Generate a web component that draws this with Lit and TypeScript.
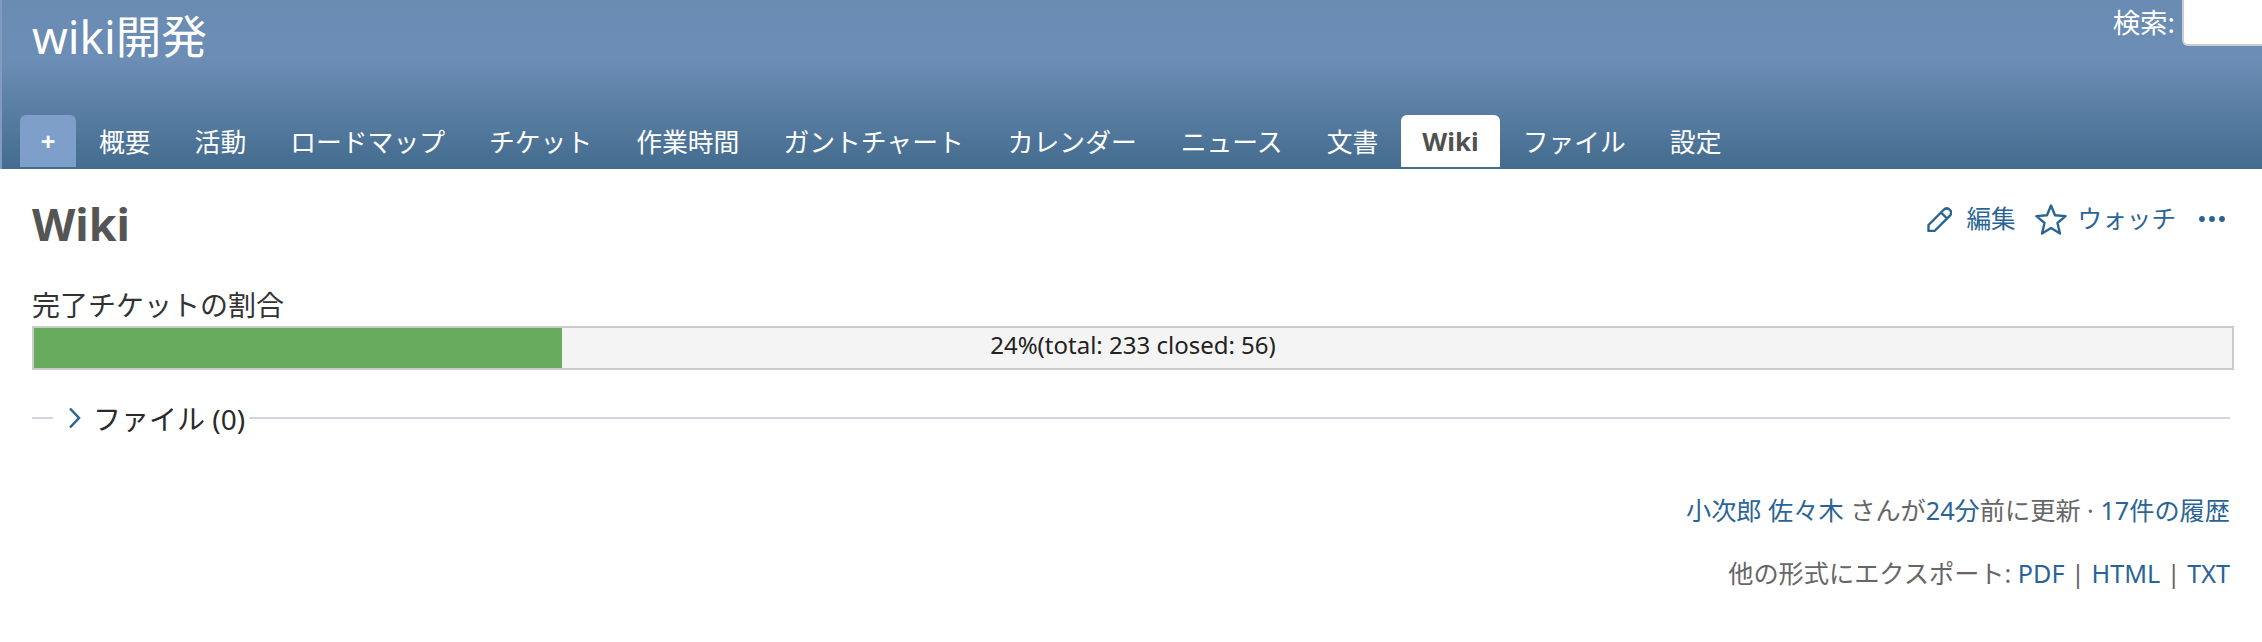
import { LitElement, html, css } from "lit";
import { customElement } from "lit/decorators.js";

const TABS = ["概要","活動","ロードマップ","チケット","作業時間","ガントチャート","カレンダー","ニュース","文書","Wiki","ファイル","設定"];

@customElement("app-root")
export class AppRoot extends LitElement {
  static styles = css`
    :host { display: block; font-family: "Noto Sans", "Open Sans", "Noto Sans CJK JP", sans-serif; color: #333; background: #fff; height: 642px; overflow: hidden; }
    a { color: #2a6496; text-decoration: none; }
    header {
      height: 169px; box-sizing: border-box; display: flex; flex-direction: column;
      background: linear-gradient(to bottom, #6a8cb3 0, #6c8db5 60px, #436c8e 169px);
      border-left: 2px solid #7f9cc0;
    }
    .top { flex: 1; display: flex; justify-content: space-between; align-items: flex-start; min-height: 0; }
    h1 { margin: 6px 0 0 30px; font-size: 45.6px; line-height: 60px; font-weight: 400; color: #fff; }
    .search { display: flex; align-items: flex-start; color: #fff; font-size: 27.5px; line-height: 36px; margin-top: 5px; }
    .search input {
      width: 80px; height: 46px; margin: -5px 0 0 7px; box-sizing: border-box; background: #fff; padding: 0;
      border: 2px solid #ccc; border-right: 0; border-top: 0; border-radius: 0 0 0 6px; outline: none;
    }
    nav { display: flex; gap: 2px; padding: 0 0 2px 18px; height: 54px; box-sizing: border-box; }
    .tab {
      height: 52px; padding: 0 21px; display: flex; align-items: center; color: #fff; font-size: 25.8px;
      border-radius: 6px 6px 0 0; box-sizing: border-box; white-space: nowrap;
    }
    .tab.plus { width: 56px; padding: 0; justify-content: center; background: #7f9fcb; font-weight: 700; font-size: 25.6px; }
    .tab.sel { background: #fff; color: #505050; font-weight: 700; }
    main { padding: 0 32px; }
    .head { display: flex; justify-content: space-between; align-items: flex-start; height: 120px; }
    h2 { margin: 20px 0 0; font-size: 44.8px; line-height: 70px; font-weight: 700; color: #555; }
    .actions { display: flex; align-items: center; margin-top: 33px; font-size: 24.6px; line-height: 34px; }
    .actions a { display: flex; align-items: center; }
    .actions svg { display: block; }
    .pencil { margin-right: 14px; }
    .star { margin: 0 11px 0 19px; }
    .dots { margin-left: 23px; margin-right: 5px; }
    .label { font-size: 28px; line-height: 36px; color: #333; height: 37px; margin-top: -2px; padding-bottom: 2px; }
    .bar { height: 44px; margin-right: -4px; box-sizing: border-box; border: 2px solid #ccc; background: #f4f4f4; position: relative; display: flex; align-items: center; justify-content: center; font-size: 24px; line-height: 32px; color: #222; padding-bottom: 7px; }
    .fill { position: absolute; left: 0; top: 0; bottom: 0; background: #67ab5d; }
    .txt { position: relative; }
    .fs { display: flex; align-items: center; margin-top: 28px; height: 40px; font-size: 28px; color: #2a2a2a; }
    .line { height: 2px; background: #cfd6e1; }
    .line.s { width: 21px; }
    .line.g { flex: 1; }
    .chev { margin: 0 12px 0 15px; display: block; }
    .fs .t { margin-right: 4px; }
    .foot { text-align: right; font-size: 25.2px; color: #666; line-height: 36px; margin-top: 54px; }
    .foot p { margin: 0 0 27px; }
  `;
  render() {
    return html`
      <header>
        <div class="top">
          <h1>wiki開発</h1>
          <div class="search"><span>検索:</span><input /></div>
        </div>
        <nav>
          <div class="tab plus">+</div>
          ${TABS.map(t => html`<div class="tab ${t === "Wiki" ? "sel" : ""}">${t}</div>`)}
        </nav>
      </header>
      <main>
        <div class="head">
          <h2>Wiki</h2>
          <div class="actions">
            <a>
              <svg class="pencil" width="25" height="25" viewBox="0 0 25 25" fill="none" stroke="#2a6496" stroke-width="2.4" stroke-linejoin="round">
                <path d="M1.5 24 L1.5 18 L16.5 3 C18.5 1 21 1 23 3 C24.8 5 24.5 7.2 22.5 9.2 L7.5 24 Z" />
                <path d="M14 5.5 L20 11.5" />
              </svg>
              編集
            </a>
            <a>
              <svg class="star" width="32" height="31" viewBox="0 0 32 31" fill="none" stroke="#2a6496" stroke-width="2.4" stroke-linejoin="round">
                <path d="M16 1.5 L20 11.3 L30.5 12.1 L22.5 19 L25 29.5 L16 24 L7 29.5 L9.5 19 L1.5 12.1 L12 11.3 Z" />
              </svg>
              ウォッチ
            </a>
            <a class="dots">
              <svg width="26" height="8" viewBox="0 0 26 8" fill="#2a6496"><circle cx="3" cy="4" r="2.9"/><circle cx="13" cy="4" r="2.9"/><circle cx="23" cy="4" r="2.9"/></svg>
            </a>
          </div>
        </div>
        <div class="label">完了チケットの割合</div>
        <div class="bar"><div class="fill" style="width:24%"></div><span class="txt">24%(total: 233 closed: 56)</span></div>
        <div class="fs">
          <div class="line s"></div>
          <svg class="chev" width="13" height="22" viewBox="0 0 13 22" fill="none" stroke="#2a6496" stroke-width="2.5"><path d="M2 1.5 L11 11 L2 20.5"/></svg>
          <span class="t">ファイル (0)</span>
          <div class="line g"></div>
        </div>
        <div class="foot">
          <p><a>小次郎 佐々木</a> さんが<a>24分</a>前に更新 · <a>17件の履歴</a></p>
          <p>他の形式にエクスポート: <a>PDF</a> | <a>HTML</a> | <a>TXT</a></p>
        </div>
      </main>
    `;
  }
}
